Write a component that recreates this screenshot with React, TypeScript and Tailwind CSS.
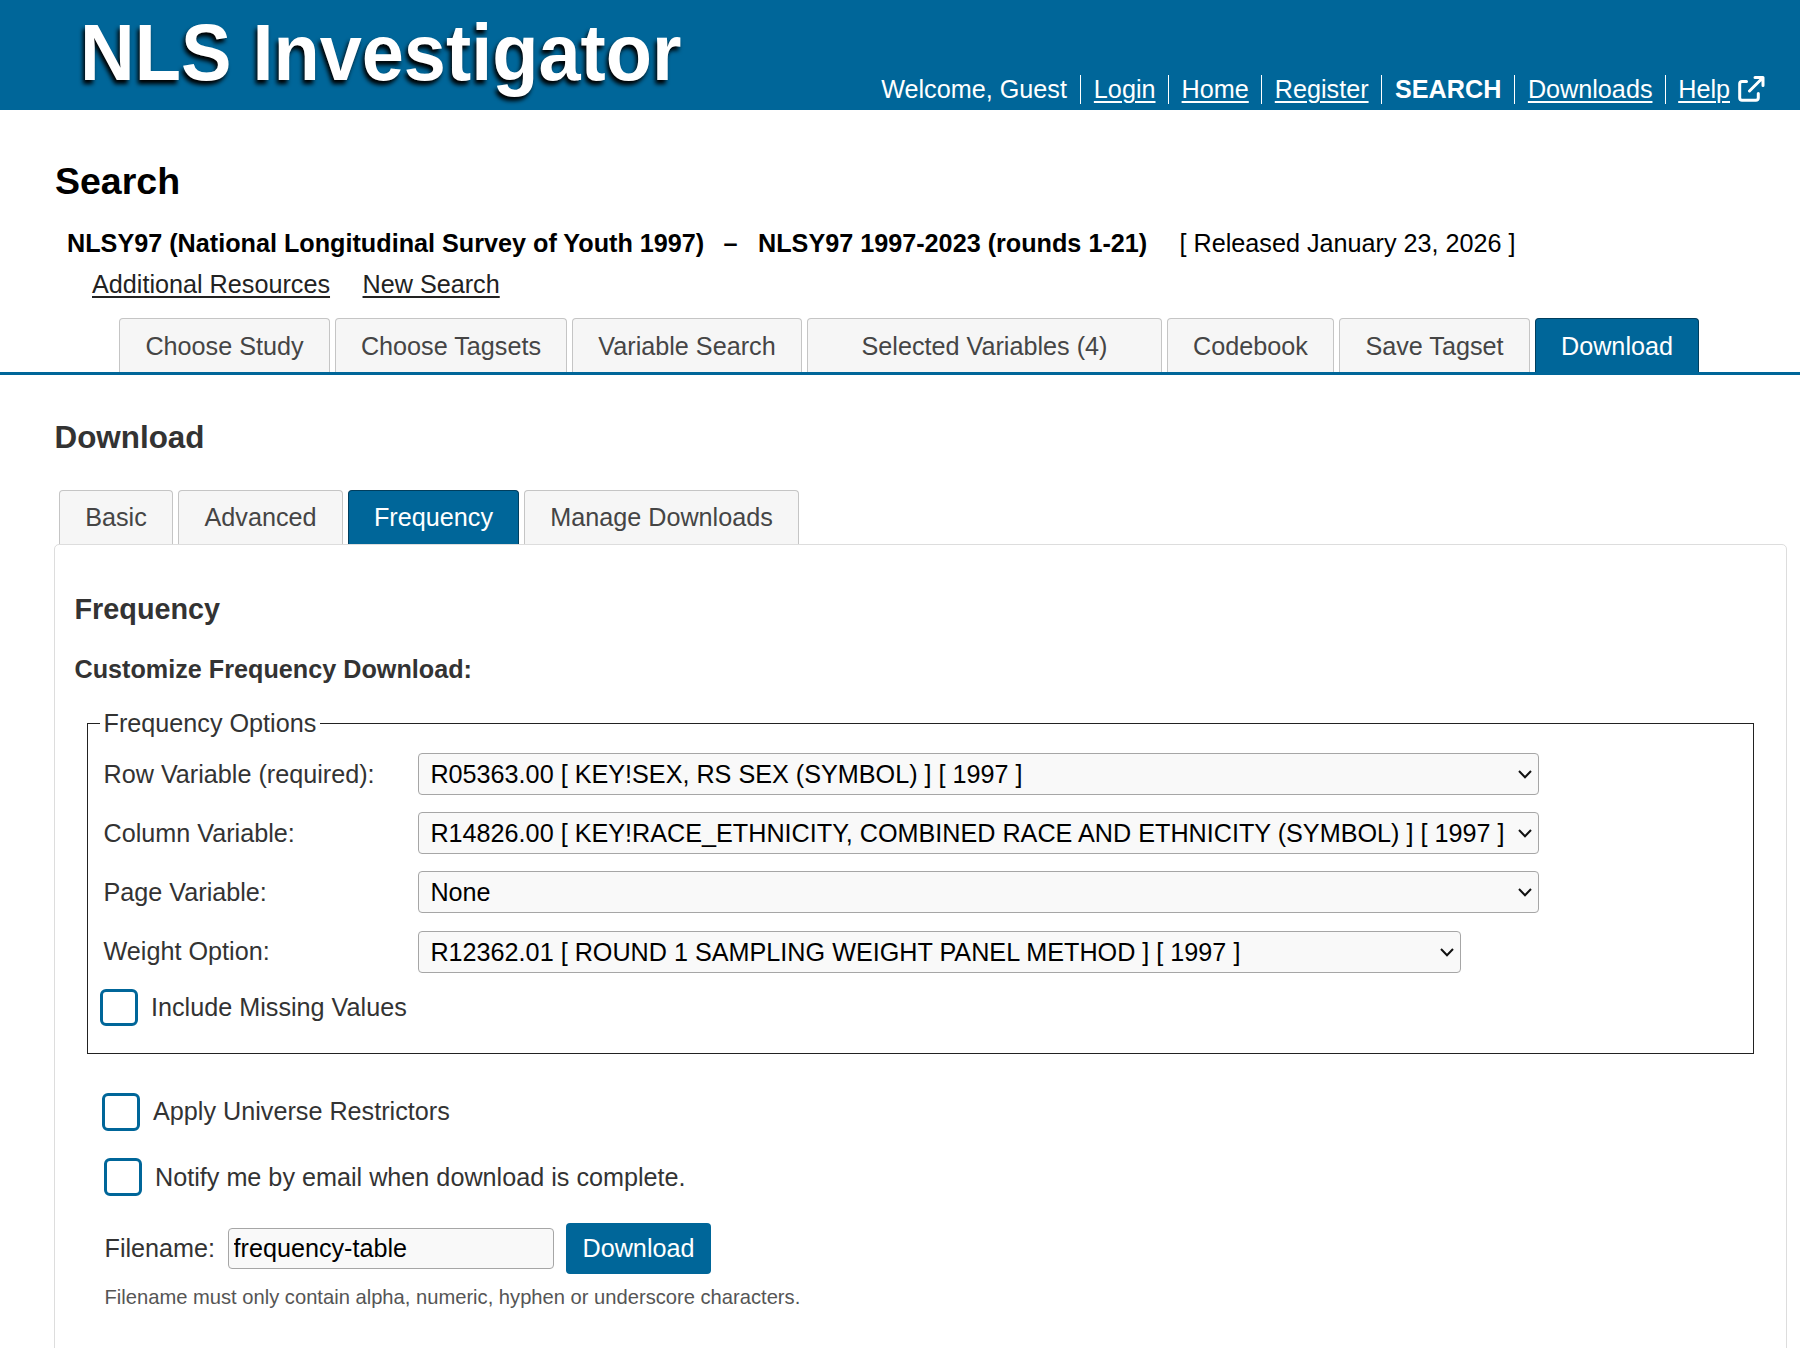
const navLinks = [
  { label: "Login", width: "w-[88px]" },
  { label: "Home", width: "w-[93px]" },
  { label: "Register", width: "w-[120px]" },
  { label: "SEARCH", width: "w-[133px]", current: true },
  { label: "Downloads", width: "w-[151px]" },
];

const mainTabs = [
  { label: "Choose Study", width: "w-[211px]" },
  { label: "Choose Tagsets", width: "w-[232px]" },
  { label: "Variable Search", width: "w-[230px]" },
  { label: "Selected Variables (4)", width: "w-[355px]" },
  { label: "Codebook", width: "w-[167px]" },
  { label: "Save Tagset", width: "w-[191px]" },
  { label: "Download", width: "w-[164px]", active: true },
];

const downloadTabs = [
  { label: "Basic", width: "w-[114px]" },
  { label: "Advanced", width: "w-[165px]" },
  { label: "Frequency", width: "w-[171px]", active: true },
  { label: "Manage Downloads", width: "w-[275px]" },
];

const variables = [
  {
    label: "Row Variable (required):",
    value: "R05363.00 [ KEY!SEX, RS SEX (SYMBOL) ] [ 1997 ]",
    width: "w-[1121px]",
  },
  {
    label: "Column Variable:",
    value: "R14826.00 [ KEY!RACE_ETHNICITY, COMBINED RACE AND ETHNICITY (SYMBOL) ] [ 1997 ]",
    width: "w-[1121px]",
  },
  { label: "Page Variable:", value: "None", width: "w-[1121px]" },
  {
    label: "Weight Option:",
    value: "R12362.01 [ ROUND 1 SAMPLING WEIGHT PANEL METHOD ] [ 1997 ]",
    width: "w-[1043px] mt-[2px]",
  },
];

type TabItem = { label: string; width: string; active?: boolean };

function Tabs({ items, leading }: { items: TabItem[]; leading: string }) {
  return (
    <ul className={`flex gap-[5px] ${leading}`}>
      {items.map((tab) => (
        <li
          key={tab.label}
          className={`${tab.width} h-[54px] rounded-t-[4px] border border-b-0 text-center whitespace-nowrap ${
            tab.active
              ? "border-[#003e5e] bg-[#006699] text-white"
              : "border-[#c5c5c5] bg-[#f6f6f6] text-[#454545]"
          }`}
        >
          <a href="#">{tab.label}</a>
        </li>
      ))}
    </ul>
  );
}

function Select({ label, value, width }: { label: string; value: string; width: string }) {
  return (
    <div className={`${width} relative h-[42px]`}>
      <select
        aria-label={label}
        className="h-[42px] w-full appearance-none rounded-[4px] border border-[#a6a6a6] bg-[#f9f9f9] pl-[11.4px] text-black"
      >
        <option>{value}</option>
      </select>
      <svg className="absolute top-[17px] right-[7px]" width="14" height="9" viewBox="0 0 14 9" fill="none" stroke="#111" strokeWidth="2">
        <path d="M1 1l6 6.2L13 1" />
      </svg>
    </div>
  );
}

function Checkbox({ label, height = "h-[38px]", textOffset = "" }: { label: string; height?: string; textOffset?: string }) {
  return (
    <label className={`flex items-center gap-[13px] ${height}`}>
      <input
        type="checkbox"
        className={`w-[38px] appearance-none rounded-[6px] border-[3px] border-[#006699] bg-white ${height}`}
      />
      <span className={textOffset}>{label}</span>
    </label>
  );
}

export default function App() {
  return (
    <div className="h-[1348px] w-[1800px] overflow-hidden bg-white font-['Liberation_Sans',Arial,sans-serif] text-[25.2px] leading-[30px] text-[#333]">
      <header className="flex h-[110px] justify-between bg-[#006699] text-white">
        <h1 className="mt-[11px] ml-[80px] origin-[0_69px] scale-y-[1.05] text-[75.7px] leading-[86px] font-bold whitespace-nowrap [text-shadow:-2px_4px_4px_#000]">
          NLS Investigator
        </h1>
        <nav className="mt-[75px] mr-[35px] flex h-[29px] leading-[29px] whitespace-nowrap">
          <span className="w-[199px]">Welcome, Guest</span>
          {navLinks.map((link) => (
            <span key={link.label} className={`${link.width} border-l border-white text-center`}>
              {link.current ? (
                <strong>{link.label}</strong>
              ) : (
                <a href="#" className="underline decoration-2 underline-offset-[3px]">{link.label}</a>
              )}
            </span>
          ))}
          <span className="flex border-l border-white pl-[12px]">
            <a href="#" className="underline decoration-2 underline-offset-[3px]">Help</a>
            <svg className="mt-px ml-[8px]" width="27" height="26" viewBox="0 0 27 26" fill="none" stroke="currentColor" strokeWidth="3" strokeLinecap="round" strokeLinejoin="round">
              <path d="M8.5 5.5H4a2.3 2.3 0 0 0-2.3 2.3V22A2.3 2.3 0 0 0 4 24.3H18A2.3 2.3 0 0 0 20.3 22V17.5" />
              <path d="M17 1.5H25V9.5M24.5 2L11.5 15" />
            </svg>
          </span>
        </nav>
      </header>

      <h2 className="mt-[49px] ml-[55px] text-[37.5px] leading-[44px] font-bold text-black">Search</h2>
      <div className="mt-[25px] ml-[67px] flex leading-[30px] whitespace-nowrap text-black">
        <strong className="w-[656.5px]">NLSY97 (National Longitudinal Survey of Youth 1997)</strong>
        <strong className="w-[34.5px]">–</strong>
        <strong className="w-[421.5px]">NLSY97 1997-2023 (rounds 1-21)</strong>
        <span>[ Released January 23, 2026 ]</span>
      </div>
      <div className="mt-[11px] ml-[92px] flex gap-[32.5px] text-[#222]">
        <a href="#" className="underline decoration-2 underline-offset-[3px]">Additional Resources</a>
        <a href="#" className="underline decoration-2 underline-offset-[3px]">New Search</a>
      </div>

      <div className="mt-[19px] border-b-[3px] border-[#006699] pl-[119px]">
        <Tabs items={mainTabs} leading="leading-[55px]" />
      </div>

      <main>
        <h2 className="mt-[44px] ml-[54.5px] text-[31.4px] leading-[38px] font-bold">Download</h2>
        <div className="mt-[33px] pl-[59px]">
          <Tabs items={downloadTabs} leading="leading-[53px]" />
        </div>

        <section className="ml-[54px] h-[850px] w-[1733px] rounded-[5px] border border-[#ddd] pl-[19.5px]">
          <h3 className="mt-[46px] text-[28.8px] leading-[36px] font-bold">Frequency</h3>
          <h4 className="mt-[27px] leading-[30px] font-bold">Customize Frequency Download:</h4>

          <fieldset className="mt-[24px] ml-[12.5px] h-[346px] w-[1667px] border border-[#222] pl-[12px]">
            <legend className="px-[3.5px] leading-[30px]">Frequency Options</legend>
            <div className="mt-[15px] flex flex-col gap-[17px] pl-[3.5px]">
              {variables.map((variable) => (
                <div key={variable.label} className="flex h-[42px] items-center">
                  <span className="w-[314.5px]">{variable.label}</span>
                  <Select {...variable} />
                </div>
              ))}
            </div>
            <div className="mt-[17px]">
              <Checkbox label="Include Missing Values" height="h-[37px]" textOffset="mb-px" />
            </div>
          </fieldset>

          <div className="mt-[39px] ml-[27.5px]">
            <Checkbox label="Apply Universe Restrictors" textOffset="mb-[2px]" />
          </div>
          <div className="mt-[27px] ml-[29.5px]">
            <Checkbox label="Notify me by email when download is complete." />
          </div>

          <div className="mt-[27px] ml-[30px] flex h-[51px] items-center">
            <label htmlFor="filename" className="mb-[2px] w-[123.5px]">Filename:</label>
            <input
              id="filename"
              defaultValue="frequency-table"
              className="h-[41px] w-[326px] rounded-[4px] border border-[#a6a6a6] bg-[#f9f9f9] pl-[4.5px] text-black"
            />
            <button className="ml-[12px] h-[51px] w-[145px] rounded-[4px] bg-[#006699] pb-[2px] text-white">Download</button>
          </div>
          <p className="mt-[11px] ml-[30px] text-[20.16px] leading-[24px] text-[#555]">
            Filename must only contain alpha, numeric, hyphen or underscore characters.
          </p>
        </section>
      </main>
    </div>
  );
}
